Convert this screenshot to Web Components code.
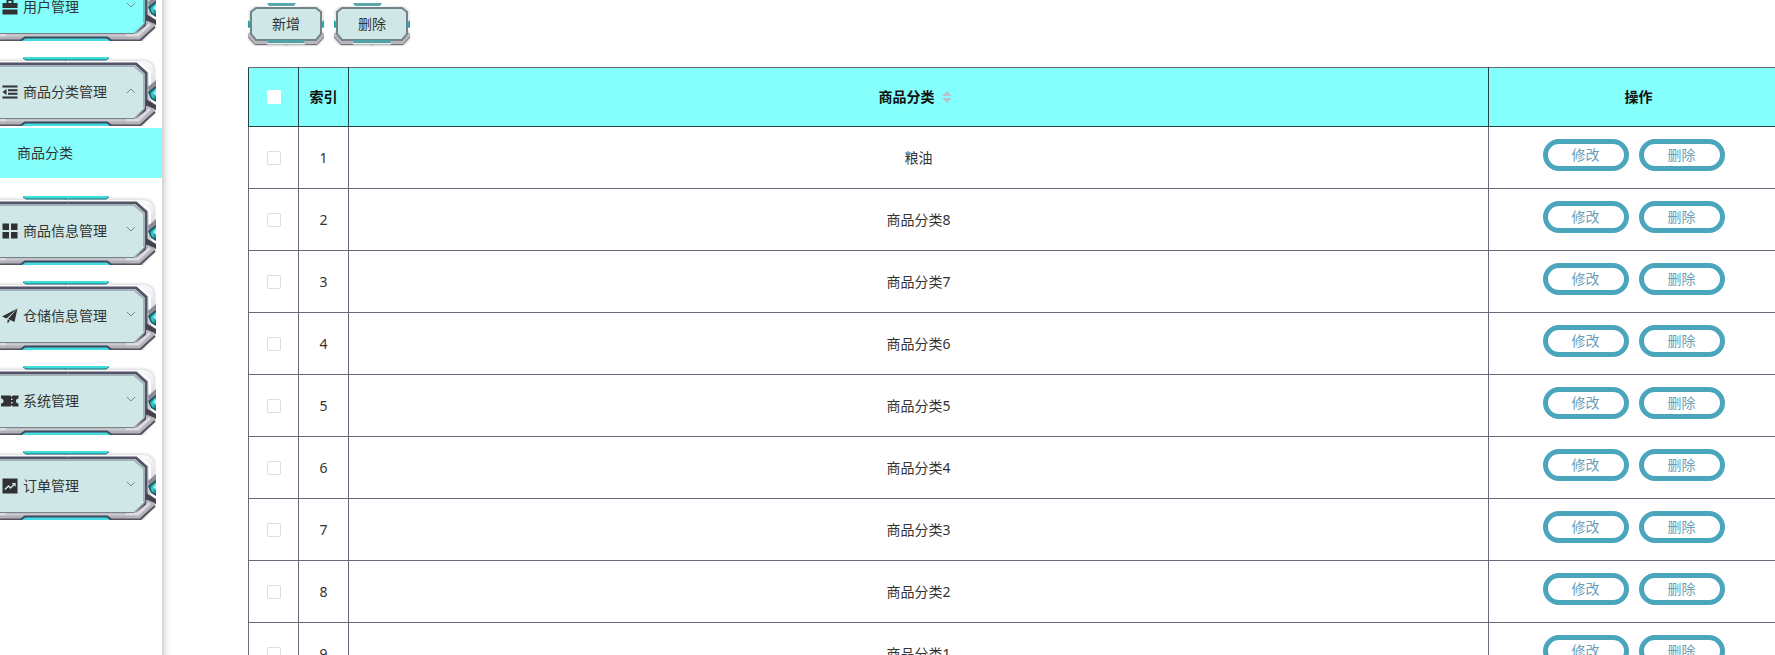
<!DOCTYPE html>
<html lang="zh-CN">
<head>
<meta charset="utf-8">
<title>商品分类</title>
<style>
    html, body {
        height: 100%;
        margin: 0;
    }

    body {
        overflow: hidden;
        background: #fff;
        color: #333;
        font: 14px/20px "Noto Sans", "Noto Sans CJK SC", sans-serif;
    }
</style>
</head>
<body>

<admin-shell>
    <side-menu slot="side">
        <menu-item icon="bag" active>用户管理</menu-item>
        <menu-item icon="fold" open>商品分类管理
            <sub-item slot="children">商品分类</sub-item>
        </menu-item>
        <menu-item icon="grid">商品信息管理</menu-item>
        <menu-item icon="plane">仓储信息管理</menu-item>
        <menu-item icon="ticket">系统管理</menu-item>
        <menu-item icon="chart">订单管理</menu-item>
    </side-menu>
    <tool-bar>
        <tech-button>新增</tech-button>
        <tech-button>删除</tech-button>
    </tool-bar>
    <category-table></category-table>
</admin-shell>

<script>
const ICONS = {
    bag: `<path d="M4.500 4V0h7v4h4v5H.500V4zM6.500 4h3V2h-3zM.500 10.500h15V15.500H.500z" fill-rule="evenodd"/>`,
    fold: `<path d="M.500 1.500h15v2H.500zM6 5.200h9.500v2H6zM6 8.800h9.500v2H6zM.500 12.500h15v2H.500zM4.500 5v6L.500 8z"/>`,
    grid: `<path d="M.500.500h6.500v6.500H.500zM9 .500h6.500v6.500H9zM.500 9h6.500v6.500H.500zM9 9h6.500v6.500H9z"/>`,
    plane: `<path d="M15.500.500 0 8.500l4.500 2zM15.500.500 6 11l6.500 3zM5.500 11.500V15.500l2.500-3z"/>`,
    ticket: `<path d="M-1 2.500h9.500l1 1.500 1-1.500h6v3a2.500 2.500 0 0 0 0 5v3h-6l-1-1.500-1 1.500H-1v-3a2.500 2.500 0 0 0 0-5zM9 5.500v1.500h1.500v-1.500zM9 9v1.500h1.500V9z" fill-rule="evenodd"/>`,
    chart: `<path d="M.500.500h15v15H.500zM2.300 10.900l1 1 3.200-3 2 2 4-4 .2 1.600 1-.1V5h-3.600l.1 1.200 1.200.1-2.900 2.800-2-2z" fill-rule="evenodd"/>`
}

// metal frame, drawn once for the right half and mirrored
const FRAME = /*html*/ `
    <svg class="frame" viewBox="0 0 180 70" preserveAspectRatio="none" aria-hidden="true">
        <defs>
            <linearGradient id="metal" x1="0" y1="0" x2="0" y2="1">
                <stop offset="0" stop-color="#fafafb"/>
                <stop offset=".35" stop-color="#dedee2"/>
                <stop offset="1" stop-color="#aeadb3"/>
            </linearGradient>
            <linearGradient id="gem" x1="0" y1="0" x2="1" y2="1">
                <stop offset="0" stop-color="#0c6f78"/>
                <stop offset=".5" stop-color="#36cfcb"/>
                <stop offset="1" stop-color="#0c6f78"/>
            </linearGradient>
            <filter id="soft" x="-10%" y="-10%" width="120%" height="120%">
                <feGaussianBlur stdDeviation="1.500"/>
            </filter>
            <g id="half">
                <path d="M89 7V4H166Q178 4 179 14V32H168z" fill="#d4d4da" filter="url(#soft)"/>
                <path d="M170 48L180 52L165 70H150z" fill="#66646f" filter="url(#soft)"/>
                <path d="M89 5H166Q177 5 178 14V29L174 34V43L179 50V56L164 69H89z" fill="url(#metal)"/>
                <path d="M89 8H160L170 17V54L159 65" fill="none" stroke="#555367" stroke-width="3"/>
                <path d="M165 8L174 16V29" fill="none" stroke="#fff" stroke-width="2"/>
                <path d="M172 31L180 24V31L173 36z" fill="#8c8a96"/>
                <path d="M172 36L180 30V46L175 43z" fill="#1a5560"/>
                <path d="M174 37L180 32V44L176 42z" fill="url(#gem)"/>
                <path d="M177 37L180 34V40z" fill="#8ff5f0"/>
                <path d="M170 43L180 49V54L170 49z" fill="#44424f"/>
                <path d="M170 50L179 53V56L163 69H150L157 64L170 55z" fill="#b5b4ba"/>
                <path d="M174 53L162 64H150" fill="none" stroke="#dcdce0" stroke-width="3"/>
                <path d="M179 56L164 69.500H136" fill="none" stroke="#55535f" stroke-width="2"/>
                <path d="M89 9H159L169 18V52L158 63H89z" fill="var(--frame-fill)"/>
                <path d="M89 10H158L168 18.500V52" fill="none" stroke="#39394b" stroke-opacity=".3" stroke-width="2"/>
                <path d="M169 52L158 62.500H89" fill="none" stroke="#77848a"/>
                <path d="M89 64.500H150" stroke="#c9c9ce" stroke-width="2"/>
                <path d="M89 66.500H131L136 70H89z" fill="#45dbe0"/>
                <path d="M89 66.500H131L136 70" fill="none" stroke="#3a4a61" stroke-width="2"/>
                <path d="M89 1H133L130 4H89z" fill="#3fe0dc"/>
                <path d="M89 4H130L133 2" fill="none" stroke="#1b6470" stroke-width="1"/>
            </g>
        </defs>
        <use href="#half"/>
        <use href="#half" transform="translate(180) scale(-1 1)"/>
    </svg>
`

const SMALL_FRAME = /*html*/ `
    <svg class="frame" viewBox="0 0 76 42" preserveAspectRatio="none" aria-hidden="true">
        <defs>
            <filter id="blur"><feGaussianBlur stdDeviation="1"/></filter>
            <g id="side">
                <path d="M50 4H70L75 8V18H70z" fill="#d0d0d6" filter="url(#blur)"/>
                <path d="M37 38H68L75 31V36L69 42H37z" fill="#999" filter="url(#blur)"/>
                <path d="M37 4H69L75 8V16L73 19V25L76 30V34L69 41H37z" fill="#e9e9ec"/>
                <path d="M73 28L76 31V34L69 41H57L55 38H67L73 32z" fill="#b8b7bc"/>
                <path d="M76 34L69 41.500H57" fill="none" stroke="#73727c"/>
                <path d="M73 20L76 17V25L73 24z" fill="#22a7a7"/>
                <path d="M37 5H68L73 9V31L68 37H37z" fill="var(--frame-fill)"/>
                <path d="M37 5H68L73 9V31L68 37H37" fill="none" stroke="#75838a" stroke-width="2"/>
                <path d="M37 37H57L56 40H37z" fill="#4fa3a6"/>
            </g>
        </defs>
        <use href="#side"/>
        <use href="#side" transform="translate(76) scale(-1 1)"/>
        <path d="M19 0H48L46 3H21z" fill="#5ba8aa"/>
    </svg>
`

class AdminShell extends HTMLElement {
    constructor() {
        super()
        this.attachShadow({ mode: "open" })
        this.shadowRoot.innerHTML = /*html*/ `
            <style>
                :host {
                    display: flex;
                    min-height: calc(100% + 29px);
                    margin: -29px -14px 0 -30px;
                }

                aside {
                    flex: none;
                    width: 192px;
                    box-shadow: 1px 0 8px rgba(64, 64, 64, .4);
                }

                main {
                    flex: 1;
                    min-width: 0;
                    padding: 32px 0 0 86px;
                }
            </style>

            <aside><slot name="side"></slot></aside>
            <main><slot></slot></main>
        `
    }
}

class SideMenu extends HTMLElement {
    constructor() {
        super()
        this.attachShadow({ mode: "open" })
        this.shadowRoot.innerHTML = /*html*/ `
            <style>
                :host {
                    display: block;
                }

                nav {
                    display: flex;
                    flex-direction: column;
                    gap: 15px;
                }
            </style>

            <nav><slot></slot></nav>
        `
    }
}

class MenuItem extends HTMLElement {
    constructor() {
        super()
        this.attachShadow({ mode: "open" })
        const open = this.hasAttribute("open")
        this.shadowRoot.innerHTML = /*html*/ `
            <style>
                :host {
                    --frame-fill: #cfe7e7;
                    display: block;
                }

                :host([active]) {
                    --frame-fill: #84fffb;
                }

                button {
                    all: unset;
                    display: grid;
                    box-sizing: border-box;
                    width: 100%;
                    height: 70px;
                    padding: 0 6px;
                    cursor: pointer;
                }

                .frame, .label {
                    grid-area: 1 / 1;
                    width: 100%;
                    height: 70px;
                }

                .label {
                    z-index: 1;
                    display: flex;
                    align-items: center;
                    gap: 5px;
                    box-sizing: border-box;
                    padding: 2px 20px 0 26px;
                }

                .icon {
                    overflow: visible;
                    fill: #303133;
                }

                .arrow {
                    margin-left: auto;
                    fill: none;
                    stroke: #7d8a8c;
                }

                .children {
                    padding: 2px 0;
                }
            </style>

            <button type="button" aria-expanded="${open}">
                ${FRAME}
                <span class="label">
                    <svg class="icon" width="16" height="16" viewBox="0 0 16 16">${ICONS[this.getAttribute("icon")]}</svg>
                    <span><slot></slot></span>
                    <svg class="arrow" width="10" height="10" viewBox="0 0 10 10">
                        <path d="${open ? "M1 6l4-4 4 4" : "M1 1l4 4 4-4"}"/>
                    </svg>
                </span>
            </button>
            ${open ? `<div class="children"><slot name="children"></slot></div>` : ""}
        `
    }
}

class SubItem extends HTMLElement {
    constructor() {
        super()
        this.attachShadow({ mode: "open" })
        this.shadowRoot.innerHTML = /*html*/ `
            <style>
                :host {
                    display: block;
                }

                a {
                    display: block;
                    padding-left: 47px;
                    background: #84fffb;
                    color: #333;
                    line-height: 50px;
                    text-decoration: none;
                }
            </style>

            <a href="#"><slot></slot></a>
        `
    }
}

class ToolBar extends HTMLElement {
    constructor() {
        super()
        this.attachShadow({ mode: "open" })
        this.shadowRoot.innerHTML = /*html*/ `
            <style>
                :host {
                    display: flex;
                    gap: 10px;
                    margin-bottom: 22px;
                }
            </style>

            <slot></slot>
        `
    }
}

class TechButton extends HTMLElement {
    constructor() {
        super()
        this.attachShadow({ mode: "open", delegatesFocus: true })
        this.shadowRoot.innerHTML = /*html*/ `
            <style>
                :host {
                    --frame-fill: #cfe7e7;
                    display: block;
                }

                button {
                    all: unset;
                    display: grid;
                    place-items: center;
                    width: 76px;
                    height: 42px;
                    cursor: pointer;
                }

                .frame, span {
                    grid-area: 1 / 1;
                }

                .frame {
                    width: 100%;
                    height: 42px;
                    overflow: visible;
                }

                span {
                    z-index: 1;
                }
            </style>

            <button type="button">${SMALL_FRAME}<span><slot></slot></span></button>
        `
    }
}

class PillButton extends HTMLElement {
    constructor() {
        super()
        this.attachShadow({ mode: "open", delegatesFocus: true })
        this.shadowRoot.innerHTML = /*html*/ `
            <style>
                :host {
                    display: inline-block;
                    margin: 0 10px 5px 0;
                    vertical-align: middle;
                }

                button {
                    display: block;
                    box-sizing: border-box;
                    width: 86px;
                    height: 32px;
                    padding: 0;
                    border: 5px solid #49a6bc;
                    border-radius: 16px;
                    background: #fff;
                    color: #6a9fb8;
                    font: inherit;
                    cursor: pointer;
                }
            </style>

            <button type="button"><slot></slot></button>
        `
    }
}

class CategoryTable extends HTMLElement {
    _rows = ["粮油", "商品分类8", "商品分类7", "商品分类6", "商品分类5", "商品分类4", "商品分类3", "商品分类2", "商品分类1"]

    constructor() {
        super()
        this.attachShadow({ mode: "open" })
        this.shadowRoot.innerHTML = /*html*/ `
            <style>
                :host {
                    display: block;
                }

                table {
                    width: 100%;
                    table-layout: fixed;
                    border-collapse: collapse;
                    text-align: center;
                }

                .narrow {
                    width: 50px;
                }

                .actions {
                    width: 300px;
                }

                th, td {
                    box-sizing: border-box;
                    height: 62px;
                    padding: 0;
                    border: 1px solid #6c6b7c;
                }

                th {
                    height: 59px;
                    border-color: #6c6b7c #23424a #23424a;
                    background: #84fffb;
                    color: #111;
                }

                td:last-child {
                    font-size: 0;
                }

                pill-button {
                    font-size: 14px;
                }

                input {
                    appearance: none;
                    display: block;
                    box-sizing: border-box;
                    width: 14px;
                    height: 14px;
                    margin: 0 auto;
                    border: 1px solid #dcdfe6;
                    border-radius: 1px;
                    background: #fff;
                }

                th input {
                    border-color: #fff;
                }

                .sort {
                    vertical-align: -2px;
                    fill: #b4c4d0;
                }
            </style>

            <table>
                <colgroup>
                    <col class="narrow"><col class="narrow"><col><col class="actions">
                </colgroup>
                <thead>
                    <tr>
                        <th><input type="checkbox" aria-label="全选"></th>
                        <th>索引</th>
                        <th>商品分类<svg class="sort" width="24" height="14" viewBox="0 0 24 14"><path d="M12 1l5 5H7zM12 13l5-5H7z"/></svg></th>
                        <th>操作</th>
                    </tr>
                </thead>
                <tbody>${this._rows.map((name, i) => this._row(name, i + 1)).join("")}</tbody>
            </table>
        `
    }

    _row(name, index) {
        return /*html*/ `
            <tr>
                <td><input type="checkbox" aria-label="${name}"></td>
                <td>${index}</td>
                <td>${name}</td>
                <td><pill-button>修改</pill-button><pill-button>删除</pill-button></td>
            </tr>
        `
    }
}

customElements.define("admin-shell", AdminShell)
customElements.define("side-menu", SideMenu)
customElements.define("menu-item", MenuItem)
customElements.define("sub-item", SubItem)
customElements.define("tool-bar", ToolBar)
customElements.define("tech-button", TechButton)
customElements.define("pill-button", PillButton)
customElements.define("category-table", CategoryTable)
</script>
</body>
</html>
